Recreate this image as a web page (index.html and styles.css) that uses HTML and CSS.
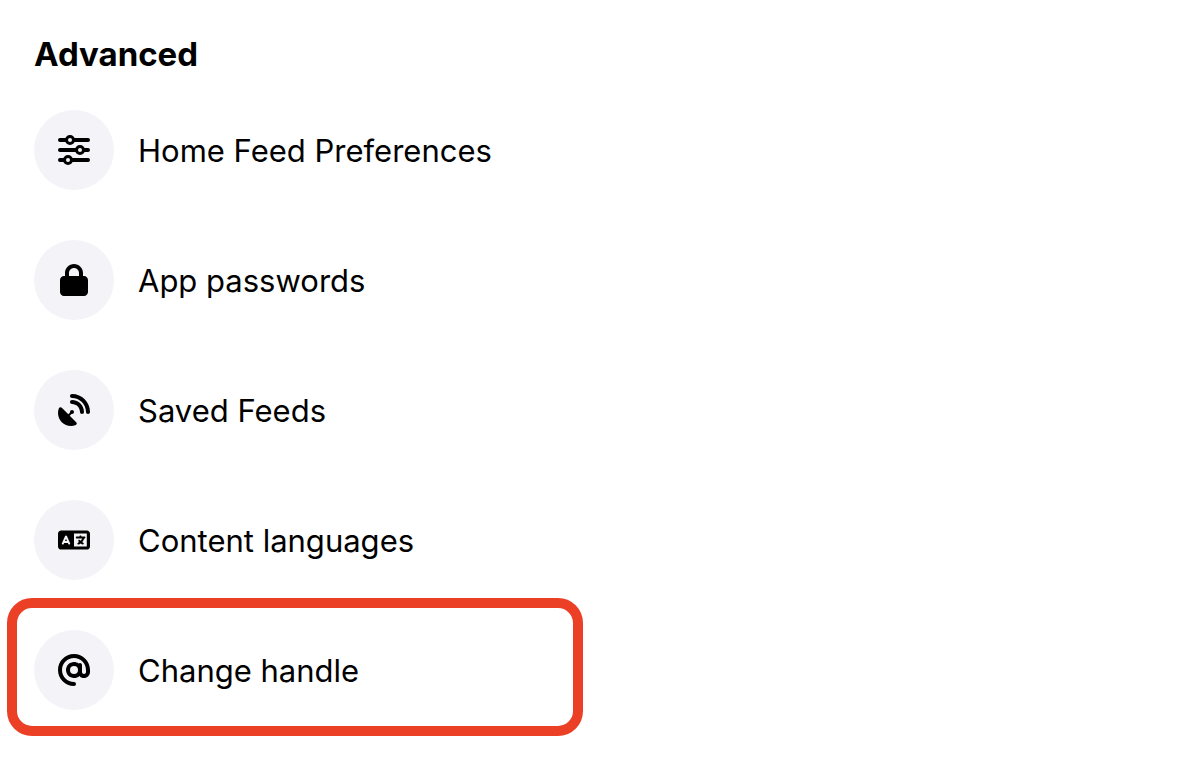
FILE: index.html
```html
<!DOCTYPE html>
<html lang="en">
<head>
<meta charset="utf-8">
<meta name="viewport" content="width=device-width, initial-scale=1">
<title>Advanced</title>
<link rel="stylesheet" href="styles.css">
</head>
<body>
<main class="settings">
  <h1 class="settings-title">Advanced</h1>
  <nav class="settings-list" aria-label="Advanced">
    <a class="row" href="#feed">
      <span class="row-icon">
        <svg class="icon" viewBox="0 0 32 32" aria-hidden="true">
          <path d="M2 6H30M2 16H30M2 26H30" stroke="#000" stroke-width="4" stroke-linecap="round"/>
          <g fill="#f3f3f8" stroke="#000" stroke-width="3"><circle cx="12" cy="6" r="3.5"/><circle cx="22" cy="16" r="3.5"/><circle cx="10" cy="26" r="3.5"/></g>
        </svg>
      </span>
      <span class="row-label">Home Feed Preferences</span>
    </a>
    <a class="row" href="#passwords">
      <span class="row-icon">
        <svg class="icon" viewBox="0 0 448 512" aria-hidden="true"><path d="M144 144v48H304V144c0-44.200-35.800-80-80-80s-80 35.800-80 80zM80 192V144C80 64.500 144.500 0 224 0s144 64.500 144 144v48h16c35.300 0 64 28.700 64 64V448c0 35.300-28.700 64-64 64H64c-35.300 0-64-28.700-64-64V256c0-35.300 28.700-64 64-64H80z"/></svg>
      </span>
      <span class="row-label">App passwords</span>
    </a>
    <a class="row" href="#saved">
      <span class="row-icon">
        <svg class="icon" viewBox="0 0 512 512" aria-hidden="true"><path d="M192 32c0-17.700 14.300-32 32-32C383.100 0 512 128.900 512 288c0 17.700-14.300 32-32 32s-32-14.300-32-32C448 164.300 347.700 64 224 64c-17.700 0-32-14.300-32-32zM60.600 220.600L164.700 324.700l28.400-28.400c-.7-2.600-1.100-5.400-1.100-8.300c0-17.700 14.300-32 32-32s32 14.300 32 32s-14.300 32-32 32c-2.900 0-5.600-.4-8.300-1.100l-28.400 28.400L291.400 451.400c14.500 14.500 11.800 38.800-7.300 46.300C260.500 506.900 234.900 512 208 512C93.100 512 0 418.900 0 304c0-26.900 5.100-52.500 14.400-76.100c7.500-19 31.800-21.800 46.300-7.300zM224 96c106 0 192 86 192 192c0 17.700-14.300 32-32 32s-32-14.300-32-32c0-70.700-57.300-128-128-128c-17.700 0-32-14.300-32-32s14.300-32 32-32z"/></svg>
      </span>
      <span class="row-label">Saved Feeds</span>
    </a>
    <a class="row" href="#languages">
      <span class="row-icon">
        <svg class="icon" viewBox="0 0 640 512" aria-hidden="true"><path d="M0 128C0 92.700 28.700 64 64 64H256h48 16H576c35.300 0 64 28.700 64 64V384c0 35.300-28.700 64-64 64H320 304 256 64c-35.300 0-64-28.700-64-64V128zm320 0V384H576V128H320zM178.300 175.900c-3.200-7.200-10.400-11.900-18.300-11.900s-15.100 4.700-18.300 11.900l-64 144c-4.500 10.100 .1 21.900 10.200 26.400s21.900-.1 26.400-10.200l8.900-20.100h73.600l8.900 20.100c4.500 10.100 16.300 14.700 26.400 10.200s14.700-16.300 10.200-26.400l-64-144zM160 233.200L179 276H141l19-42.800zM448 164c11 0 20 9 20 20v4h44 16c11 0 20 9 20 20s-9 20-20 20h-2l-1.600 4.500c-8.900 24.400-22.400 46.600-39.600 65.400c.9 .6 1.800 1.100 2.700 1.600l18.900 11.300c9.500 5.700 12.500 18 6.900 27.400s-18 12.500-27.400 6.900l-18.900-11.300c-4.500-2.700-8.800-5.500-13.100-8.500c-10.600 7.500-21.900 14-34 19.400l-3.600 1.600c-10.100 4.500-21.900-.1-26.400-10.200s.1-21.900 10.200-26.400l3.600-1.600c6.400-2.900 12.600-6.100 18.500-9.800l-12.200-12.200c-7.800-7.800-7.800-20.500 0-28.300s20.500-7.800 28.300 0l14.600 14.600 .5 .5c12.400-13.100 22.500-28.300 29.800-45H448 376c-11 0-20-9-20-20s9-20 20-20h52v-4c0-11 9-20 20-20z"/></svg>
      </span>
      <span class="row-label">Content languages</span>
    </a>
    <a class="row row-highlighted" href="#handle">
      <span class="row-icon">
        <svg class="icon" viewBox="0 0 512 512" aria-hidden="true"><path d="M256 64C150 64 64 150 64 256s86 192 192 192c17.700 0 32 14.300 32 32s-14.300 32-32 32C114.600 512 0 397.400 0 256S114.600 0 256 0S512 114.600 512 256v32c0 53-43 96-96 96c-29.300 0-55.600-13.200-73.200-33.900C320 371.100 289.500 384 256 384c-70.700 0-128-57.300-128-128s57.300-128 128-128c27.900 0 53.700 8.900 74.700 24.100c5.700-5 13.100-8.100 21.300-8.100c17.700 0 32 14.300 32 32v80 32c0 17.700 14.300 32 32 32s32-14.300 32-32V256c0-106-86-192-192-192zm64 192a64 64 0 1 0 -128 0 64 64 0 1 0 128 0z"/></svg>
      </span>
      <span class="row-label">Change handle</span>
    </a>
  </nav>
</main>
</body>
</html>
```
FILE: styles.css
```css
* {
  box-sizing: border-box;
}

body {
  margin: 0;
  background: #fff;
  color: #000;
  font-family: Inter, "Liberation Sans", sans-serif;
}

.settings {
  padding: 34px 34px 50px;
}

.settings-title {
  margin: 0 0 36px;
  font-size: 33px;
  line-height: 40px;
  font-weight: 700;
}

.settings-list {
  display: flex;
  flex-direction: column;
  gap: 50px;
  max-width: 522px;
}

.row {
  position: relative;
  display: flex;
  align-items: center;
  gap: 24px;
  color: inherit;
  text-decoration: none;
}

.row-icon {
  display: flex;
  flex: none;
  align-items: center;
  justify-content: center;
  width: 80px;
  height: 80px;
  border-radius: 50%;
  background: #f3f3f8;
}

.icon {
  width: 32px;
  height: 32px;
}

.row-label {
  padding-top: 2px;
  font-size: 31px;
  line-height: 40px;
}

.row-highlighted::after {
  content: "";
  position: absolute;
  inset: -32px -27px -26px;
  border: 10px solid #eb4026;
  border-radius: 25px;
}
```
